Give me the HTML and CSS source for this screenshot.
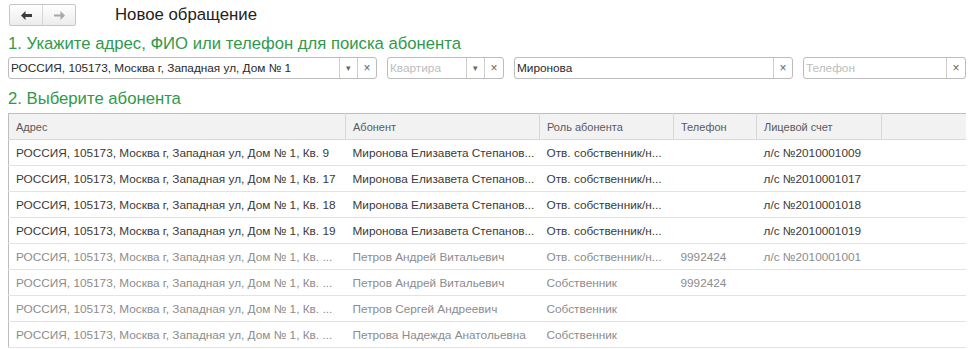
FILE: index.html
```html
<!DOCTYPE html>
<html lang="ru">
<head>
    <meta charset="UTF-8">
    <title>Новое обращение</title>
    <link rel="stylesheet" href="styles.css">
</head>
<body>

    <!-- Header -->
    <div class="topbar">
        <div class="nav">
            <span class="nav-btn">
                <svg width="11" height="9" viewBox="0 0 11 9"><path d="M0 4.5 L4.5 0 V3 H11 V6 H4.5 V9 Z" fill="currentColor"/></svg>
            </span>
            <span class="nav-btn off">
                <svg width="11" height="9" viewBox="0 0 11 9"><path d="M11 4.5 L6.5 0 V3.6 H0 V5.4 H6.5 V9 Z" fill="currentColor"/></svg>
            </span>
        </div>
        <div class="title">Новое обращение</div>
    </div>

    <!-- Search -->
    <div class="step">1. Укажите адрес, ФИО или телефон для поиска абонента</div>
    <div class="filters">
        <div class="field f-addr">
            <span class="val">РОССИЯ, 105173, Москва г, Западная ул, Дом № 1</span>
            <span class="btn drop">&#9662;</span>
            <span class="btn clr">&#215;</span>
        </div>
        <div class="field f-flat">
            <span class="val ph">Квартира</span>
            <span class="btn drop">&#9662;</span>
            <span class="btn clr">&#215;</span>
        </div>
        <div class="field f-name">
            <span class="val">Миронова</span>
            <span class="btn clr">&#215;</span>
        </div>
        <div class="field f-phone">
            <span class="val ph">Телефон</span>
            <span class="btn clr">&#215;</span>
        </div>
    </div>

    <!-- Results -->
    <div class="step step2">2. Выберите абонента</div>
    <table class="grid">
        <colgroup>
            <col class="c-addr">
            <col class="c-name">
            <col class="c-role">
            <col class="c-phone">
            <col class="c-acc">
            <col>
        </colgroup>
        <thead>
            <tr>
                <th>Адрес</th>
                <th>Абонент</th>
                <th>Роль абонента</th>
                <th>Телефон</th>
                <th>Лицевой счет</th>
                <th></th>
            </tr>
        </thead>
        <tbody>
            <tr>
                <td>РОССИЯ, 105173, Москва г, Западная ул, Дом № 1, Кв. 9</td>
                <td>Миронова Елизавета Степанов...</td>
                <td>Отв. собственник/н...</td>
                <td></td>
                <td>л/с №2010001009</td>
                <td></td>
            </tr>
            <tr>
                <td>РОССИЯ, 105173, Москва г, Западная ул, Дом № 1, Кв. 17</td>
                <td>Миронова Елизавета Степанов...</td>
                <td>Отв. собственник/н...</td>
                <td></td>
                <td>л/с №2010001017</td>
                <td></td>
            </tr>
            <tr>
                <td>РОССИЯ, 105173, Москва г, Западная ул, Дом № 1, Кв. 18</td>
                <td>Миронова Елизавета Степанов...</td>
                <td>Отв. собственник/н...</td>
                <td></td>
                <td>л/с №2010001018</td>
                <td></td>
            </tr>
            <tr>
                <td>РОССИЯ, 105173, Москва г, Западная ул, Дом № 1, Кв. 19</td>
                <td>Миронова Елизавета Степанов...</td>
                <td>Отв. собственник/н...</td>
                <td></td>
                <td>л/с №2010001019</td>
                <td></td>
            </tr>
            <tr class="dim">
                <td>РОССИЯ, 105173, Москва г, Западная ул, Дом № 1, Кв. ...</td>
                <td>Петров Андрей Витальевич</td>
                <td>Отв. собственник/н...</td>
                <td>9992424</td>
                <td>л/с №2010001001</td>
                <td></td>
            </tr>
            <tr class="dim">
                <td>РОССИЯ, 105173, Москва г, Западная ул, Дом № 1, Кв. ...</td>
                <td>Петров Андрей Витальевич</td>
                <td>Собственник</td>
                <td>9992424</td>
                <td></td>
                <td></td>
            </tr>
            <tr class="dim">
                <td>РОССИЯ, 105173, Москва г, Западная ул, Дом № 1, Кв. ...</td>
                <td>Петров Сергей Андреевич</td>
                <td>Собственник</td>
                <td></td>
                <td></td>
                <td></td>
            </tr>
            <tr class="dim">
                <td>РОССИЯ, 105173, Москва г, Западная ул, Дом № 1, Кв. ...</td>
                <td>Петрова Надежда Анатольевна</td>
                <td>Собственник</td>
                <td></td>
                <td></td>
                <td></td>
            </tr>
        </tbody>
    </table>

</body>
</html>
```

FILE: styles.css
```css
/* General */
body {
    margin: 0;
    padding: 4px 4px 0 8px;
    font-family: "Liberation Sans", Arial, sans-serif;
    font-size: 12px;
    color: #333;
    background: #fff;
}

/* Top bar */
.topbar {
    display: flex;
    align-items: center;
    height: 22px;
}

.nav {
    display: flex;
    margin-left: 1px;
    height: 20px;
    border: 1px solid #c6c6c6;
    border-radius: 2px;
    background: linear-gradient(#ffffff, #ececec);
}

.nav-btn {
    width: 32px;
    display: flex;
    align-items: center;
    justify-content: center;
    color: #3c3c3c;
}

.nav-btn + .nav-btn {
    border-left: 1px solid #d6d6d6;
}

.nav-btn.off {
    color: #a8a8a8;
}

.title {
    margin-left: 39px;
    font-size: 16.8px;
    color: #222;
}

/* Steps */
.step {
    margin-top: 9px;
    font-size: 16.7px;
    line-height: 18px;
    color: #2f9a4a;
}

.step2 {
    margin-top: 11px;
}

/* Filter fields */
.filters {
    display: flex;
    gap: 10px;
    margin-top: 4px;
    width: 958px;
}

.field {
    display: flex;
    height: 20px;
    border: 1px solid #bcbcbc;
    border-radius: 3px;
    background: #fff;
}

.f-addr { width: 367px; }
.f-flat { width: 115px; }
.f-name { width: 277px; }
.f-phone { width: 161px; }

.val {
    flex: 1;
    padding-left: 2px;
    line-height: 20px;
    font-size: 11.8px;
    color: #2a2a2a;
    white-space: nowrap;
    overflow: hidden;
}

.val.ph {
    color: #bdbdbd;
}

.btn {
    display: flex;
    align-items: center;
    justify-content: center;
    border-left: 1px solid #cfcfcf;
    color: #666;
}

.drop {
    width: 17px;
    font-size: 9px;
}

.clr {
    width: 18px;
    font-size: 12px;
}

/* Results grid */
.grid {
    margin-top: 5px;
    width: 958px;
    table-layout: fixed;
    border-collapse: collapse;
    border: 1px solid #bdbdbd;
    border-right: none;
    border-bottom: none;
}

.c-addr { width: 337px; }
.c-name { width: 194px; }
.c-role { width: 134px; }
.c-phone { width: 83px; }
.c-acc { width: 125px; }

th {
    height: 25px;
    padding: 0 7px;
    background: #f2f2f2;
    border-bottom: 1px solid #d8d8d8;
    border-left: 1px solid #d8d8d8;
    text-align: left;
    font-weight: normal;
    font-size: 11px;
    color: #5a5a5a;
}

th:first-child {
    border-left: none;
}

td {
    height: 24px;
    padding: 1px 7px 0;
    border-bottom: 1px solid #e3e3e3;
    white-space: nowrap;
    overflow: hidden;
    font-size: 11.8px;
    color: #3a3a3a;
}

tr.dim td {
    color: #8c8c8c;
}
```
